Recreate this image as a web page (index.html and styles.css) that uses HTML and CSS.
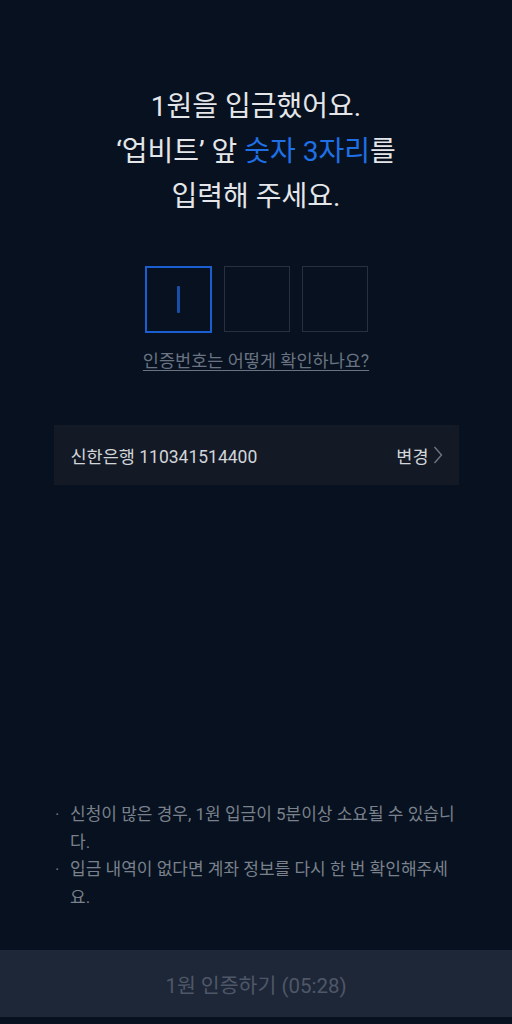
FILE: index.html
```html
<!DOCTYPE html>
<html lang="ko">
<head>
  <meta charset="UTF-8" />
  <meta name="viewport" content="width=device-width, initial-scale=1" />
  <title>1원 인증</title>
  <link rel="stylesheet" href="styles.css">
</head>
<body>
  <div class="screen">
    <h1 class="title">
      1원을 입금했어요.<br>
      ‘업비트’ 앞 <span class="accent">숫자 3자리</span>를<br>
      입력해 주세요.
    </h1>

    <div class="code">
      <div class="digit active"><span class="cursor"></span></div>
      <div class="digit"></div>
      <div class="digit"></div>
    </div>

    <a class="help" href="#">인증번호는 어떻게 확인하나요?</a>

    <div class="account">
      <span class="account-name">신한은행 110341514400</span>
      <span class="change">변경
        <svg width="10" height="18" viewBox="0 0 10 18"><path d="M1.5 1 L8.5 9 L1.5 17" fill="none" stroke="#6f7683" stroke-width="1.4"/></svg>
      </span>
    </div>

    <ul class="notes">
      <li>신청이 많은 경우, 1원 입금이 5분이상 소요될 수 있습니다.</li>
      <li>입금 내역이 없다면 계좌 정보를 다시 한 번 확인해주세요.</li>
    </ul>

    <button class="submit" disabled>1원 인증하기 (05:28)</button>
  </div>
</body>
</html>
```

FILE: styles.css
```css
body {
  margin: 0;
  background: #07111f;
  font-family: Roboto, "Noto Sans CJK KR", sans-serif;
}

.screen {
  height: 1024px;
  display: flex;
  flex-direction: column;
  align-items: center;
}

.title {
  margin: 84px 0 0;
  font-size: 28px;
  font-weight: 400;
  line-height: 45px;
  text-align: center;
  color: #e4e6ea;
}

.accent {
  color: #1f6fe5;
}

.code {
  display: flex;
  gap: 12px;
  margin-top: 47px;
}

.digit {
  width: 64px;
  height: 64px;
  border: 1px solid #273040;
  display: flex;
  justify-content: center;
  align-items: center;
}

.digit.active {
  width: 63px;
  height: 63px;
  border: 2px solid #1b5ed0;
}

.cursor {
  width: 3px;
  height: 27px;
  border-radius: 1px;
  background: #1a4fa8;
}

.help {
  margin-top: 16px;
  font-size: 17.5px;
  line-height: 24px;
  color: #6a7382;
  text-decoration: underline;
  text-underline-offset: 3px;
}

.account {
  margin-top: 52px;
  width: 405px;
  height: 60px;
  box-sizing: border-box;
  padding: 0 16px 0 17px;
  background: #131a25;
  display: flex;
  justify-content: space-between;
  align-items: center;
  font-size: 17.5px;
  color: #d2d5da;
}

.change {
  display: flex;
  align-items: center;
  gap: 4px;
}

.notes {
  margin: auto 0 0;
  padding: 0 0 0 70px;
  width: 459px;
  box-sizing: border-box;
  align-self: flex-start;
  list-style: none;
  font-size: 17px;
  line-height: 27.5px;
  color: #7a818c;
}

.notes li {
  position: relative;
}

.notes li::before {
  content: "·";
  position: absolute;
  left: -15px;
  color: #6a7180;
}

.submit {
  margin: 39px 0 7px;
  width: 100%;
  height: 67px;
  border: none;
  background: #1e2738;
  font-family: inherit;
  font-size: 20.5px;
  color: #4e5767;
}
```
